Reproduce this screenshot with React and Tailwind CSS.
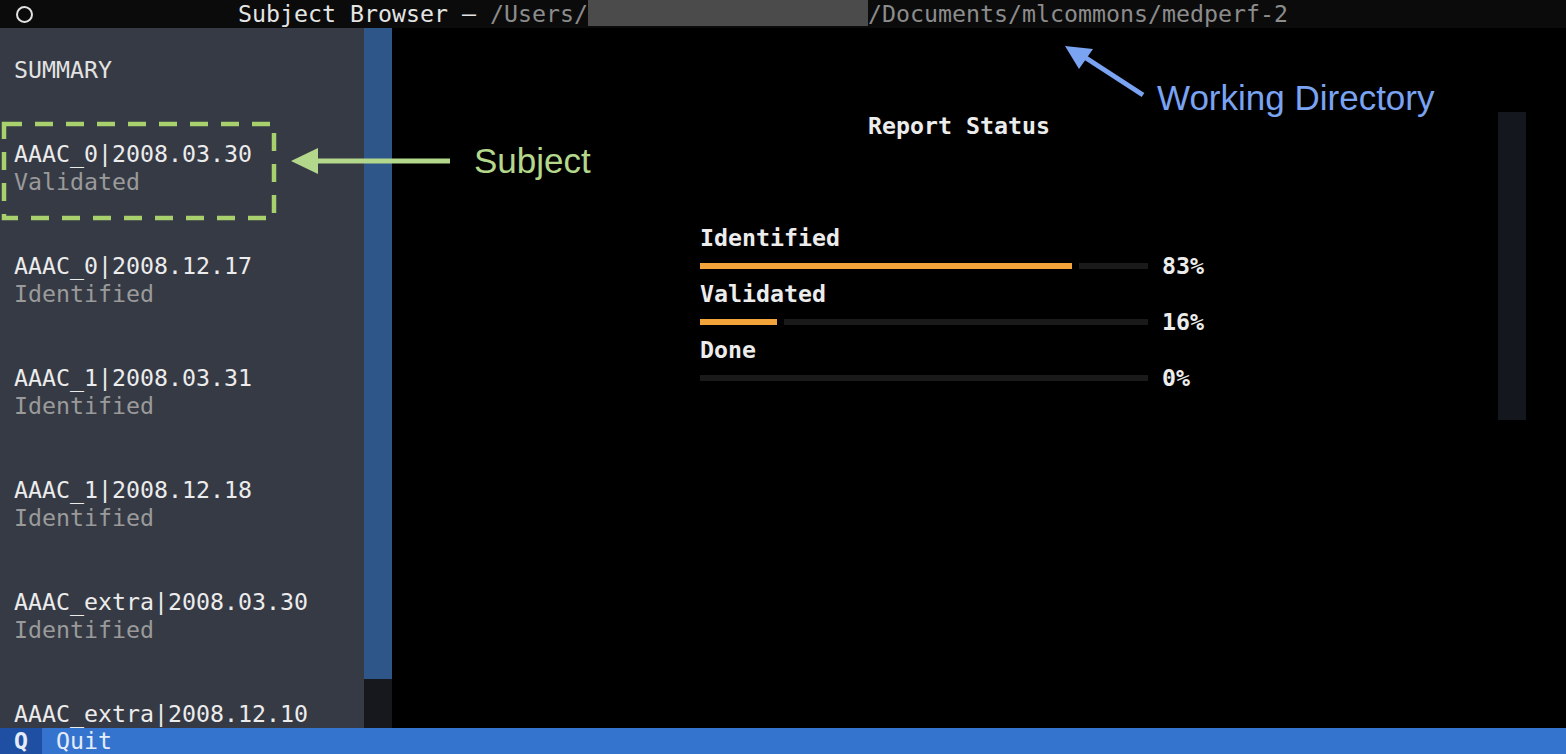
import React from 'react';

// last row's status falls below the footer, so it isn't drawn
const subjects = [
  { id: 'AAAC_0|2008.03.30', status: 'Validated' },
  { id: 'AAAC_0|2008.12.17', status: 'Identified' },
  { id: 'AAAC_1|2008.03.31', status: 'Identified' },
  { id: 'AAAC_1|2008.12.18', status: 'Identified' },
  { id: 'AAAC_extra|2008.03.30', status: 'Identified' },
  { id: 'AAAC_extra|2008.12.10', status: null },
];

const stats = [
  { label: 'Identified', pct: 83, fill: 372 },
  { label: 'Validated', pct: 16, fill: 77 },
  { label: 'Done', pct: 0, fill: 0 },
];

const BAR_W = 448;

function Bar({ fill }) {
  // orange part, a small gap, then the dark remainder of the track
  const restStart = fill > 0 ? fill + 7 : 0;
  return (
    <div className="flex items-center w-[448px] h-[6px]">
      {fill > 0 && <div className="h-[6px] bg-[#f2a33a] shrink-0" style={{ width: fill }} />}
      {fill > 0 && <div className="w-[7px] shrink-0" />}
      <div className="h-[6px] bg-[#1a1a1a] shrink-0" style={{ width: BAR_W - restStart }} />
    </div>
  );
}

export default function App() {
  return (
    <div className="relative w-[1566px] h-[754px] overflow-hidden bg-black flex flex-col font-['DejaVu_Sans_Mono',monospace] text-[23.25px] leading-[28px]">
      {/* title bar */}
      <div className="h-[28px] shrink-0 bg-[#0b0b0b] flex items-center">
        <div className="w-[238px] shrink-0 pl-[16px] flex items-center">
          <span className="w-[17px] h-[17px] rounded-full border-2 border-[#e2e2e2]" />
        </div>
        <span className="text-[#e4e4e4] whitespace-pre">Subject Browser — </span>
        <span className="text-[#8c8c8c]">/Users/</span>
        <span className="w-[280px] h-[26px] self-start bg-[#4b4b4b]" />
        <span className="text-[#8c8c8c]">/Documents/mlcommons/medperf-2</span>
      </div>

      {/* body */}
      <div className="flex-1 flex min-h-0">
        {/* sidebar */}
        <div className="w-[364px] shrink-0 bg-[#363a45] pl-[14px] pt-[28px] flex flex-col overflow-hidden">
          <div className="h-[28px] text-[#e2e2e2]">SUMMARY</div>
          {subjects.map((s) => (
            <div key={s.id} className="mt-[56px] flex flex-col shrink-0">
              <div className="h-[28px] text-[#ececec] whitespace-pre">{s.id}</div>
              {s.status && <div className="h-[28px] text-[#9a9a9a]">{s.status}</div>}
            </div>
          ))}
        </div>
        {/* sidebar scrollbar */}
        <div className="w-[28px] shrink-0 flex flex-col">
          <div className="h-[651px] bg-[#2f5689]" />
          <div className="flex-1 bg-[#16181e]" />
        </div>

        {/* main */}
        <div className="flex-1 pt-[84px]">
          <div className="w-[1134px] flex">
            <div className="flex-1 flex flex-col font-bold text-[#ececec]">
              <div className="h-[28px] pl-[476px]">Report Status</div>
              <div className="mt-[84px] pl-[308px] flex flex-col">
                {stats.map((st) => (
                  <div key={st.label} className="flex flex-col">
                    <div className="h-[28px]">{st.label}</div>
                    <div className="h-[28px] flex items-center">
                      <Bar fill={st.fill} />
                      <span className="ml-[14px]">{st.pct}%</span>
                    </div>
                  </div>
                ))}
              </div>
            </div>
            <div className="w-[28px] h-[308px] shrink-0 bg-[#15171e]" />
          </div>
        </div>
      </div>

      {/* footer */}
      <div className="h-[26px] shrink-0 bg-[#3474cf] flex leading-[26px] text-[#e4ecf8]">
        <div className="w-[42px] bg-[#1f4fa3] pl-[14px] font-bold">Q</div>
        <div className="pl-[14px]">Quit</div>
      </div>

      {/* annotations */}
      <svg className="absolute inset-0 pointer-events-none" width="1566" height="754">
        <rect x="4" y="124" width="270" height="94" fill="none" stroke="#a8d06c" strokeWidth="4.5" strokeDasharray="18 13" />
        <line x1="450" y1="161" x2="314" y2="161" stroke="#b3d78b" strokeWidth="5" />
        <polygon points="291,161 318,148 318,174" fill="#b3d78b" />
        <line x1="1143" y1="95" x2="1086" y2="58" stroke="#7aa3f2" strokeWidth="5" />
        <polygon points="1065,46 1093,49 1079,69" fill="#7aa3f2" />
      </svg>
      <div className="absolute left-[474px] top-[141px] font-['Liberation_Sans',Arial,sans-serif] text-[35px] leading-[40px] text-[#b3d78b]">Subject</div>
      <div className="absolute left-[1157px] top-[78px] font-['Liberation_Sans',Arial,sans-serif] text-[35px] leading-[40px] text-[#7aa3f2] whitespace-pre">Working Directory</div>
    </div>
  );
}
